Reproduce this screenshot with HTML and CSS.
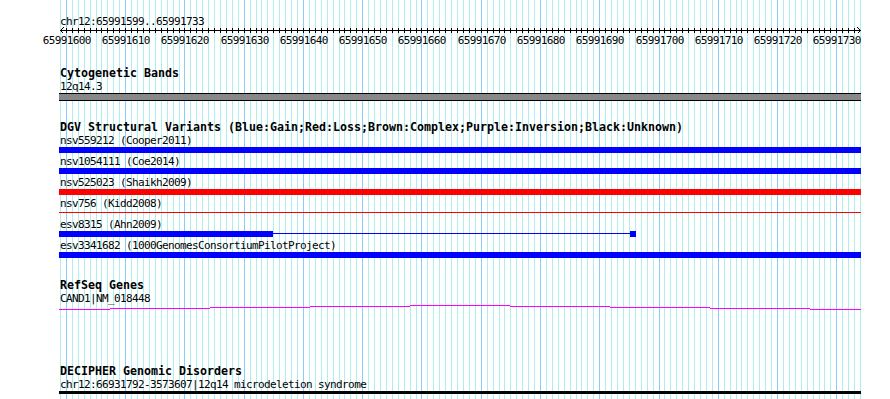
FILE: index.html
```html
<!DOCTYPE html>
<html>
<head>
    <title>chr12:65991599..65991733</title>
    <link rel="stylesheet" href="styles.css">
</head>
<body>
    <div class="page">
        <svg class="grid" id="grid" width="890" height="399"></svg>

        <div class="tracks">
            <div class="ruler">
                <div class="label">chr12:65991599..65991733</div>
                <svg class="scale" id="scale" width="802" height="19" viewBox="59 28 802 19"></svg>
            </div>

            <div class="track cytoband">
                <div class="title">Cytogenetic Bands</div>
                <div class="label">12q14.3</div>
                <div class="band"></div>
            </div>

            <div class="track dgv">
                <div class="title">DGV Structural Variants (Blue:Gain;Red:Loss;Brown:Complex;Purple:Inversion;Black:Unknown)</div>
                <div class="feature">
                    <div class="label">nsv559212 (Cooper2011)</div>
                    <div class="bar gain"></div>
                </div>
                <div class="feature">
                    <div class="label">nsv1054111 (Coe2014)</div>
                    <div class="bar gain"></div>
                </div>
                <div class="feature">
                    <div class="label">nsv525023 (Shaikh2009)</div>
                    <div class="bar loss"></div>
                </div>
                <div class="feature">
                    <div class="label">nsv756 (Kidd2008)</div>
                    <div class="glyph">
                        <div class="thin loss full"></div>
                    </div>
                </div>
                <div class="feature">
                    <div class="label">esv8315 (Ahn2009)</div>
                    <div class="glyph">
                        <div class="block gain" style="width: 214px"></div>
                        <div class="thin gain" style="width: 357px"></div>
                        <div class="block gain" style="width: 6px"></div>
                    </div>
                </div>
                <div class="feature">
                    <div class="label">esv3341682 (1000GenomesConsortiumPilotProject)</div>
                    <div class="bar gain"></div>
                </div>
            </div>

            <div class="track refseq">
                <div class="title">RefSeq Genes</div>
                <div class="label">CAND1|NM_018448</div>
                <!-- intron hat, the gene runs past both edges of the window -->
                <svg class="hat" width="802" height="6" viewBox="59 305 802 6">
                    <path d="M59 309.5H110M110 308.5H210M210 307.5H310M310 306.5H410M410 305.5H510M510 306.5H610M610 307.5H710M710 308.5H810M810 309.5H861" />
                </svg>
            </div>

            <div class="track decipher">
                <div class="title">DECIPHER Genomic Disorders</div>
                <div class="label">chr12:66931792-3573607|12q14 microdeletion syndrome</div>
                <div class="bar syndrome"></div>
            </div>
        </div>
    </div>

    <script src="script.js"></script>
</body>
</html>
```

FILE: styles.css
```css
body {
    margin: 0;
    background: #fff;
    color: #000;
    font-family: 'DejaVu Sans Mono', monospace;
    font-size: 11px;
    letter-spacing: -0.62px;
}
.page {
    position: relative;
    width: 890px;
    height: 399px;
    overflow: hidden;
}
.grid {
    position: absolute;
    top: 0;
    left: 0;
    shape-rendering: crispEdges;
}
.tracks {
    position: relative;
    margin-left: 59px;
    width: 802px;
}
.ruler {
    padding-top: 15px;
}
.scale {
    display: block;
    overflow: visible;
    shape-rendering: crispEdges;
}
.scale text {
    font-family: 'DejaVu Sans Mono', monospace;
    font-size: 11px;
    letter-spacing: -0.62px;
}
.title {
    height: 13px;
    line-height: 13px;
    padding-left: 1px;
    font-size: 11.63px;
    font-weight: bold;
    letter-spacing: 0;
    white-space: nowrap;
}
.label {
    height: 13px;
    line-height: 13px;
    padding-left: 1px;
    white-space: nowrap;
}
.track {
    margin-top: 20px;
}
.refseq {
    margin-top: 19px;
}
.decipher {
    margin-top: 54px;
}
.band {
    height: 8px;
    box-sizing: border-box;
    background: #888;
    border-top: 1px solid #000;
    border-bottom: 1px solid #000;
}
.feature {
    padding-bottom: 2px;
}
.bar {
    height: 6px;
}
.glyph {
    display: flex;
    height: 6px;
}
.block {
    height: 6px;
}
.thin {
    height: 1px;
    margin-top: 2px;
}
.full {
    flex: 1;
}
.gain {
    background: #0000ff;
}
.loss {
    background: #ff0000;
}
.syndrome {
    height: 3px;
    background: #000;
}
.hat {
    display: block;
    shape-rendering: crispEdges;
}
.hat path {
    fill: none;
    stroke: #ff00ff;
    stroke-width: 1;
}
```

FILE: script.js
```js
// 135 bp window drawn across 800 px, starting at x = 60
var START = 65991599;
var END = 65991733;
var LEFT = 60;
var WIDTH = 800;
var SVGNS = 'http://www.w3.org/2000/svg';

function xOf(pos) {
    return Math.round(LEFT + (pos - START) * WIDTH / (END - START + 1));
}

function add(parent, name, attrs) {
    var node = document.createElementNS(SVGNS, name);
    for (var key in attrs) node.setAttribute(key, attrs[key]);
    parent.appendChild(node);
    return node;
}

// background grid: one line per base, darker every 10 bp
var grid = document.getElementById('grid');
for (var pos = START; pos <= END + 1; pos++) {
    add(grid, 'rect', {
        x: xOf(pos), y: 0, width: 1, height: 399,
        fill: pos % 10 === 0 ? '#87cefa' : '#afeeee'
    });
}

// ruler: axis, ticks, arrows and numbers
var scale = document.getElementById('scale');
add(scale, 'rect', { x: 60, y: 30, width: 801, height: 1, fill: '#000' });
for (var p = START + 1; p <= END; p++) {
    add(scale, 'rect', { x: xOf(p), y: 28, width: 1, height: 5, fill: '#000' });
}
add(scale, 'polyline', { points: '63.5,27.5 60.5,30.5 63.5,33.5', fill: 'none', stroke: '#000' });
add(scale, 'polyline', { points: '857.5,27.5 860.5,30.5 857.5,33.5', fill: 'none', stroke: '#000' });
for (var n = Math.ceil(START / 10) * 10; n <= END; n += 10) {
    var label = add(scale, 'text', { x: xOf(n) + 0.8, y: 44, 'text-anchor': 'middle' });
    label.textContent = n;
}
```
